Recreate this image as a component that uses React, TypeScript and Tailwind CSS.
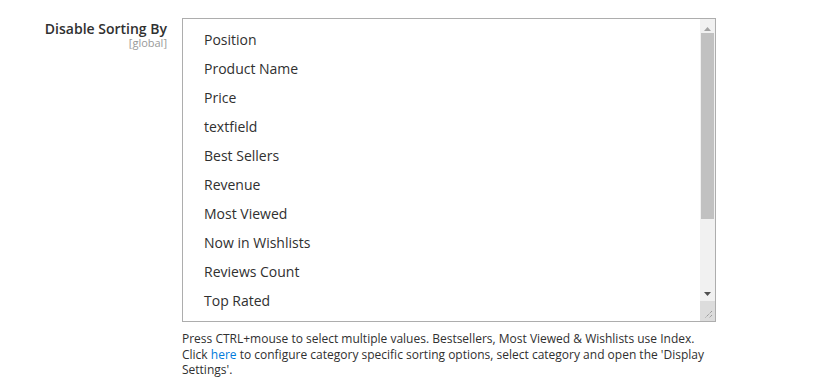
import React from 'react';

const options = [
  'Position',
  'Product Name',
  'Price',
  'textfield',
  'Best Sellers',
  'Revenue',
  'Most Viewed',
  'Now in Wishlists',
  'Reviews Count',
  'Top Rated',
];

export default function App() {
  return (
    <div className="min-h-screen bg-white font-['Open_Sans',sans-serif] text-[#303030]">
      <div className="flex pt-[18px]">
        <div className="w-[168px] pr-px text-right">
          <div className="pt-[1px] text-[14px] font-semibold leading-[20px]">Disable Sorting By</div>
          <div className="-mt-[2px] text-[11px] leading-[12px] text-[#999]">[global]</div>
        </div>
        <div className="ml-[14px] w-[534px]">
          <div className="flex h-[304px] border border-[#adadad] bg-white">
            <div className="flex-1 pt-[6px] pl-[21px]">
              {options.map((o) => (
                <div key={o} className="h-[29px] text-[14px] leading-[29px]">
                  {o}
                </div>
              ))}
            </div>
            <div className="flex w-[15px] flex-col bg-[#f1f1f1]">
              <div className="flex h-[14px] items-end justify-center pb-[2px]">
                <svg width="7" height="4" viewBox="0 0 7 4">
                  <path d="M3.5 0L7 4H0z" fill="#a3a3a3" />
                </svg>
              </div>
              <div className="mx-[1px] h-[186px] bg-[#c1c1c1]" />
              <div className="flex-1" />
              <div className="flex h-[12px] items-start justify-center pt-[3px]">
                <svg width="7" height="4" viewBox="0 0 7 4">
                  <path d="M0 0H7L3.5 4z" fill="#505050" />
                </svg>
              </div>
              <div className="flex h-[20px] items-end justify-end bg-[#dcdcdc] pr-[2px] pb-[2px]">
                <svg width="10" height="10" viewBox="0 0 10 10">
                  <path d="M9 2L2 9M9 6L6 9" stroke="#808080" strokeWidth="1" strokeDasharray="1 1" />
                </svg>
              </div>
            </div>
          </div>
          <p className="mt-[9px] text-[12px] leading-[15.5px]">
            Press CTRL+mouse to select multiple values. Bestsellers, Most Viewed &amp; Wishlists use Index.
            Click <a className="text-[#007bdb]">here</a> to configure category specific sorting options,
            select category and open the 'Display Settings'.
          </p>
        </div>
      </div>
    </div>
  );
}
